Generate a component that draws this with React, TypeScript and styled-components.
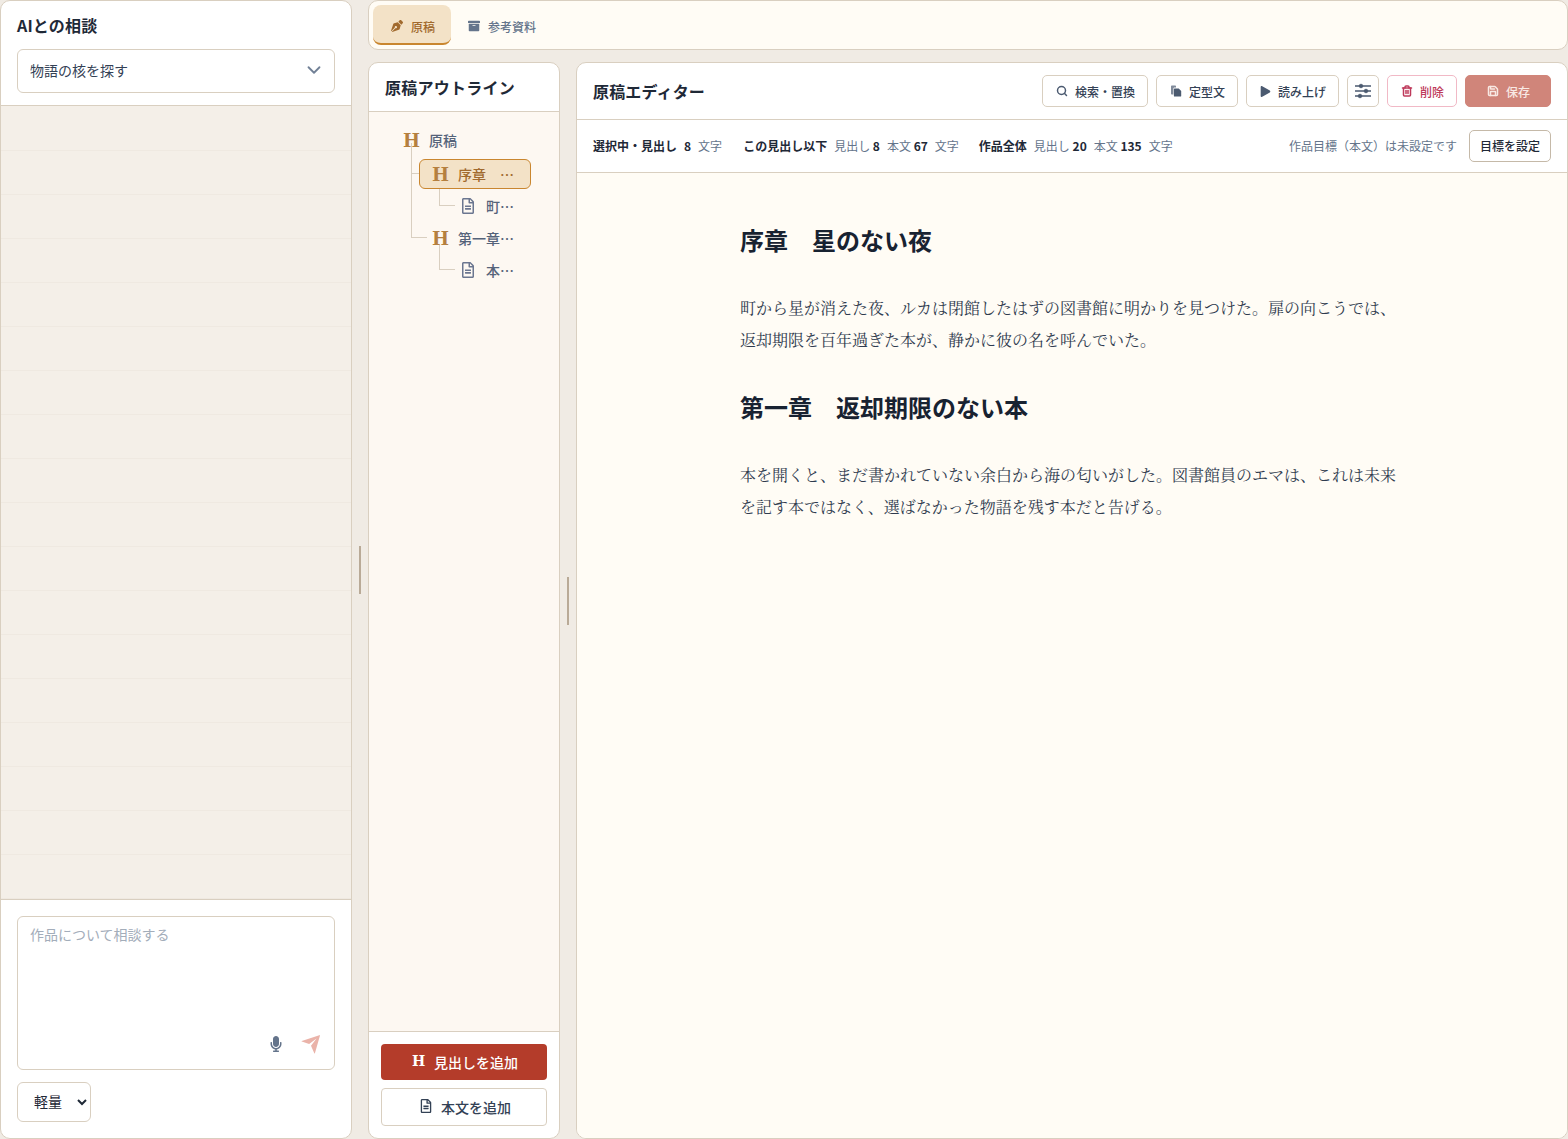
import React from "react"
import styled, { createGlobalStyle } from "styled-components"
import {
  FaArchive,
  FaMicrophone,
  FaPenNib,
  FaPlay,
  FaRegFileAlt,
} from "react-icons/fa"
import { RiSendPlaneFill } from "react-icons/ri"
import { ChevronDown, Save, Search, Trash2 } from "lucide-react"

const line = "#d9cfc0"
const ink = "#1f2937"
const slate = "#64748b"
const amber = "#b5803f"
const sans = `"Noto Sans CJK JP", "Noto Sans", sans-serif`

const GlobalStyle = createGlobalStyle`
  html, body {
    margin: 0;
    height: 100%;
    background: #f0ebe4;
    font-family: ${sans};
    color: ${ink};
  }
  * { box-sizing: border-box; }
`

const Page = styled.div`
  display: grid;
  grid-template-columns: 352px 1fr;
  column-gap: 16px;
  width: 1568px;
  height: 1139px;
  overflow: hidden;
`

const Panel = styled.section`
  display: flex;
  flex-direction: column;
  background: #fff;
  border: 1px solid ${line};
  border-radius: 10px;
  min-height: 0;
`

const ChatHead = styled.header`
  height: 105px;
  padding: 14px 16px 0;
  border-bottom: 1px solid ${line};
  flex: none;
`

const ChatTitle = styled.h2`
  margin: 0 0 13px;
  font-size: 16px;
  line-height: 21px;
  font-weight: 700;
  letter-spacing: 0.16px;
`

const ModeSelect = styled.div`
  display: flex;
  align-items: center;
  justify-content: space-between;
  height: 44px;
  padding: 0 9px 2px 12px;
  border: 1px solid ${line};
  border-radius: 6px;
  font-size: 14px;
  color: #334155;
`

const Messages = styled.div`
  flex: 1;
  background-color: #f4efe8;
  background-image: repeating-linear-gradient(
    to bottom,
    transparent 0,
    transparent 43px,
    #efe9e1 43px,
    #efe9e1 44px
  );
  background-position: 0 1px;
`

const Composer = styled.div`
  height: 239px;
  flex: none;
  padding: 16px;
  border-top: 1px solid ${line};
`

const InputBox = styled.div`
  position: relative;
  height: 154px;
  padding: 7px 12px;
  border: 1px solid ${line};
  border-radius: 6px;
  font-size: 14px;
  line-height: 20px;
  color: #a3adba;
`

const InputTools = styled.div`
  position: absolute;
  right: 12px;
  bottom: 14px;
  display: flex;
  align-items: center;
  gap: 16px;
`

const ModelSelect = styled.select`
  display: block;
  width: 74px;
  height: 40px;
  margin-top: 12px;
  padding: 0 4px 2px 12px;
  background: #fff;
  border: 1px solid ${line};
  border-radius: 6px;
  font-family: ${sans};
  font-size: 14px;
  color: ${ink};
`

const Workspace = styled.div`
  display: flex;
  flex-direction: column;
  gap: 12px;
  min-width: 0;
  min-height: 0;
`

const TabBar = styled.nav`
  display: flex;
  align-items: flex-start;
  height: 50px;
  flex: none;
  padding: 4px;
  background: #fffcf5;
  border: 1px solid ${line};
  border-radius: 10px;
`

const Tab = styled.div<{ $active?: boolean }>`
  display: flex;
  align-items: center;
  gap: 8px;
  height: 40px;
  padding: 4px 16px 0 ${({ $active }) => ($active ? 18 : 17)}px;
  font-size: 12px;
  font-weight: 500;
  color: ${({ $active }) => ($active ? "#a16a2e" : slate)};
  background: ${({ $active }) => ($active ? "#f3e2c7" : "transparent")};
  border-radius: 8px;
  border-bottom: 2px solid ${({ $active }) => ($active ? "#c9862f" : "transparent")};

  svg {
    margin-top: -1px;
  }
`

const Columns = styled.div`
  flex: 1;
  display: grid;
  grid-template-columns: 192px 1fr;
  column-gap: 16px;
  min-height: 0;
`

const OutlineHead = styled.header`
  height: 49px;
  flex: none;
  padding: 0 16px;
  display: flex;
  align-items: center;
  border-bottom: 1px solid ${line};
  font-size: 16px;
  font-weight: 700;
  letter-spacing: 0.25px;
`

const Tree = styled.div`
  position: relative;
  flex: 1;
  background: #fdf8f2;
  padding-top: 13px;
`

const Row = styled.div<{ $depth: number; $selected?: boolean }>`
  position: relative;
  display: flex;
  align-items: center;
  height: 30px;
  margin: 0 28px 2px ${({ $depth, $selected }) => 20 + $depth * 29 + ($selected ? 1 : 0)}px;
  padding: 0 ${({ $selected }) => ($selected ? "16px 0 12px" : "17px 0 14px")};
  font-size: 14px;
  font-weight: 500;
  color: ${({ $selected }) => ($selected ? "#a16a2e" : "#55637a")};
  background: ${({ $selected }) => ($selected ? "#f3e2c7" : "transparent")};
  border: ${({ $selected }) => ($selected ? "1px solid #c9862f" : "none")};
  border-radius: 6px;

  &:first-of-type {
    margin-bottom: 4px;
  }
`

const HeadingMark = styled.span`
  flex: none;
  width: 26px;
  margin-top: 2px;
  font-family: "DejaVu Serif", serif;
  font-weight: 700;
  font-size: 18px;
  line-height: 20px;
  color: ${amber};
`

const FileMark = styled.span`
  flex: none;
  display: flex;
  width: 26px;
  margin-left: -1px;
  color: #6b7690;
`

const RowLabel = styled.span`
  flex: 1;
  min-width: 0;
  white-space: nowrap;
  overflow: hidden;
  text-overflow: ellipsis;
`

const Connector = styled.span<{ $x: number; $top: number; $h: number; $w: number }>`
  position: absolute;
  left: ${({ $x }) => $x}px;
  top: ${({ $top }) => $top}px;
  width: ${({ $w }) => $w}px;
  height: ${({ $h }) => $h}px;
  border-left: 1px solid ${line};
  border-bottom: 1px solid ${line};
`

const OutlineFoot = styled.footer`
  height: 107px;
  flex: none;
  display: flex;
  flex-direction: column;
  gap: 8px;
  padding: 12px;
  border-top: 1px solid ${line};
`

const WideButton = styled.button<{ $primary?: boolean }>`
  display: flex;
  align-items: center;
  justify-content: center;
  gap: ${({ $primary }) => ($primary ? 9 : 8)}px;
  height: ${({ $primary }) => ($primary ? 36 : 38)}px;
  padding: 0 0 0 2px;
  font-family: ${sans};
  font-size: 14px;
  font-weight: 500;
  color: ${({ $primary }) => ($primary ? "#fff" : "#334155")};
  background: ${({ $primary }) => ($primary ? "#b43c2a" : "#fff")};
  border: ${({ $primary }) => ($primary ? "none" : `1px solid ${line}`)};
  border-radius: 4px;

  svg {
    margin-top: -2px;
  }
`

const ButtonH = styled.span`
  margin-top: -2px;
  font-family: "DejaVu Serif", serif;
  font-weight: 700;
  font-size: 14px;
`

const EditorHead = styled.header`
  height: 57px;
  flex: none;
  display: flex;
  align-items: center;
  justify-content: space-between;
  padding: 0 16px;
  border-bottom: 1px solid ${line};
`

const EditorTitle = styled.h2`
  margin: 0;
  font-size: 16px;
  font-weight: 700;
  letter-spacing: 0.16px;
`

const Toolbar = styled.div`
  display: flex;
  gap: 8px;
`

const ToolButton = styled.button<{ $tone?: "danger" | "save" }>`
  display: flex;
  align-items: center;
  gap: 8px;
  height: 32px;
  padding: 0 12px;
  font-family: ${sans};
  font-size: 12px;
  font-weight: 500;
  border-radius: 5px;
  color: ${({ $tone }) =>
    $tone === "danger" ? "#be3a5b" : $tone === "save" ? "#f8e9e4" : "#334155"};
  background: ${({ $tone }) => ($tone === "save" ? "#d0857a" : "#fff")};
  border: 1px solid
    ${({ $tone }) =>
      $tone === "danger" ? "#f1b9c6" : $tone === "save" ? "#d0857a" : line};

  svg {
    flex: none;
    margin: 0 -1px 0 1px;
    color: ${({ $tone }) => ($tone ? "inherit" : "#4b5a70")};
  }
`

const SaveButton = styled(ToolButton)`
  padding: 0 20px;
`

const IconButton = styled(ToolButton)`
  width: 32px;
  padding: 0;
  justify-content: center;

  svg {
    margin: 0;
  }
`

const StatsBar = styled.div`
  height: 53px;
  flex: none;
  display: flex;
  align-items: center;
  justify-content: space-between;
  padding: 0 16px 2px;
  border-bottom: 1px solid ${line};
  font-size: 12px;
  color: ${slate};
`

const StatGroups = styled.div`
  display: flex;
  gap: 20px;
`

const StatGroup = styled.div`
  display: flex;
  gap: 7px;
  white-space: nowrap;

  &:first-child {
    gap: 8px 7px;
    margin-right: 1px;
  }
`

const Strong = styled.b`
  color: ${ink};
  font-weight: 700;
`

const GoalArea = styled.div`
  display: flex;
  align-items: center;
  gap: 12px;
`

const GoalButton = styled.button`
  height: 32px;
  margin-top: 2px;
  padding: 0 10px 2px;
  font-family: ${sans};
  font-size: 12px;
  font-weight: 500;
  color: ${ink};
  background: #fff;
  border: 1px solid #c5b9a8;
  border-radius: 5px;
`

const Manuscript = styled.article`
  flex: 1;
  background: #fffcf5;
  border-radius: 0 0 9px 9px;
  padding: 47px 163px 0;
`

const ChapterTitle = styled.h1`
  margin: 0 0 32px;
  font-size: 24px;
  line-height: 40px;
  font-weight: 700;
  color: #182231;
`

const Paragraph = styled.p`
  margin: 0 0 31px;
  font-family: "Noto Serif CJK JP", "Liberation Serif", "Noto Sans CJK JP", serif;
  font-size: 16px;
  line-height: 32px;
  color: #2f3b4e;
`

const Grip = styled.span<{ $top: number; $left: number }>`
  position: absolute;
  top: ${({ $top }) => $top}px;
  left: ${({ $left }) => $left}px;
  width: 2px;
  height: 48px;
  background: #b9aa97;
`

const TemplateIcon = () => (
  <svg width="12" height="12" viewBox="0 0 12 12" fill="currentColor">
    <path d="M1 1.2C1 .8 1.3.5 1.7.5h3.6c.4 0 .7.3.7.7V2.4H4.6C3.7 2.4 3.4 3 3.4 3.7V9.4H1.7C1.3 9.4 1 9.1 1 8.7Z" opacity=".7" />
    <path d="M4.6 3.4h4.1l2.5 2.5v5c0 .4-.3.7-.7.7H4.6c-.4 0-.7-.3-.7-.7V4.1c0-.4.3-.7.7-.7Z" />
  </svg>
)

const SlidersIcon = () => (
  <svg width="16" height="16" viewBox="0 0 16 16" fill="currentColor" stroke="currentColor">
    <path d="M0 3h16M0 8h16M0 13h16" strokeWidth="1.5" />
    <circle cx="6" cy="3" r="1.8" strokeWidth="0.8" />
    <circle cx="11" cy="8" r="1.8" strokeWidth="0.8" />
    <circle cx="5" cy="13" r="1.8" strokeWidth="0.8" />
  </svg>
)

export default function App() {
  return (
    <>
      <GlobalStyle />
      <Page>
        <Panel>
          <ChatHead>
            <ChatTitle>AIとの相談</ChatTitle>
            <ModeSelect>
              物語の核を探す
              <ChevronDown size={22} color="#718096" />
            </ModeSelect>
          </ChatHead>
          <Messages />
          <Composer>
            <InputBox>
              作品について相談する
              <InputTools>
                <FaMicrophone size={16} color="#64748b" />
                <RiSendPlaneFill size={22} color="#eab3a9" />
              </InputTools>
            </InputBox>
            <ModelSelect defaultValue="light">
              <option value="light">軽量</option>
            </ModelSelect>
          </Composer>
        </Panel>
        <Workspace>
          <TabBar>
            <Tab $active>
              <FaPenNib size={12} />
              原稿
            </Tab>
            <Tab>
              <FaArchive size={12} />
              参考資料
            </Tab>
          </TabBar>
          <Columns>
            <Panel>
              <OutlineHead>原稿アウトライン</OutlineHead>
              <Tree>
                <Connector $x={42} $top={31} $w={8} $h={31} />
                <Connector $x={42} $top={31} $w={16} $h={95} />
                <Connector $x={70} $top={77} $w={16} $h={17} />
                <Connector $x={70} $top={132} $w={16} $h={26} />
                <Row $depth={0}>
                  <HeadingMark>H</HeadingMark>
                  <RowLabel>原稿</RowLabel>
                </Row>
                <Row $depth={1} $selected>
                  <HeadingMark>H</HeadingMark>
                  <RowLabel>序章　星のない夜</RowLabel>
                </Row>
                <Row $depth={2}>
                  <FileMark><FaRegFileAlt size={16} /></FileMark>
                  <RowLabel>町から星が消えた夜</RowLabel>
                </Row>
                <Row $depth={1}>
                  <HeadingMark>H</HeadingMark>
                  <RowLabel>第一章　返却期限のない本</RowLabel>
                </Row>
                <Row $depth={2}>
                  <FileMark><FaRegFileAlt size={16} /></FileMark>
                  <RowLabel>本を開くと</RowLabel>
                </Row>
              </Tree>
              <OutlineFoot>
                <WideButton $primary>
                  <ButtonH>H</ButtonH>
                  見出しを追加
                </WideButton>
                <WideButton>
                  <FaRegFileAlt size={14} />
                  本文を追加
                </WideButton>
              </OutlineFoot>
            </Panel>
            <Panel>
              <EditorHead>
                <EditorTitle>原稿エディター</EditorTitle>
                <Toolbar>
                  <ToolButton><Search size={12} strokeWidth={3} />検索・置換</ToolButton>
                  <ToolButton><TemplateIcon />定型文</ToolButton>
                  <ToolButton><FaPlay size={11} />読み上げ</ToolButton>
                  <IconButton aria-label="設定"><SlidersIcon /></IconButton>
                  <ToolButton $tone="danger"><Trash2 size={12} strokeWidth={3} />削除</ToolButton>
                  <SaveButton $tone="save"><Save size={12} strokeWidth={3} />保存</SaveButton>
                </Toolbar>
              </EditorHead>
              <StatsBar>
                <StatGroups>
                  <StatGroup>
                    <Strong>選択中・見出し</Strong>
                    <Strong>8</Strong>
                    <span>文字</span>
                  </StatGroup>
                  <StatGroup>
                    <Strong>この見出し以下</Strong>
                    <span>見出し <Strong>8</Strong></span>
                    <span>本文 <Strong>67</Strong></span>
                    <span>文字</span>
                  </StatGroup>
                  <StatGroup>
                    <Strong>作品全体</Strong>
                    <span>見出し <Strong>20</Strong></span>
                    <span>本文 <Strong>135</Strong></span>
                    <span>文字</span>
                  </StatGroup>
                </StatGroups>
                <GoalArea>
                  作品目標（本文）は未設定です
                  <GoalButton>目標を設定</GoalButton>
                </GoalArea>
              </StatsBar>
              <Manuscript>
                <ChapterTitle>序章　星のない夜</ChapterTitle>
                <Paragraph>
                  町から星が消えた夜、ルカは閉館したはずの図書館に明かりを見つけた。扉の向こうでは、返却期限を百年過ぎた本が、静かに彼の名を呼んでいた。
                </Paragraph>
                <ChapterTitle>第一章　返却期限のない本</ChapterTitle>
                <Paragraph>
                  本を開くと、まだ書かれていない余白から海の匂いがした。図書館員のエマは、これは未来を記す本ではなく、選ばなかった物語を残す本だと告げる。
                </Paragraph>
              </Manuscript>
            </Panel>
          </Columns>
        </Workspace>
        <Grip $top={546} $left={359} />
        <Grip $top={577} $left={567} />
      </Page>
    </>
  )
}
